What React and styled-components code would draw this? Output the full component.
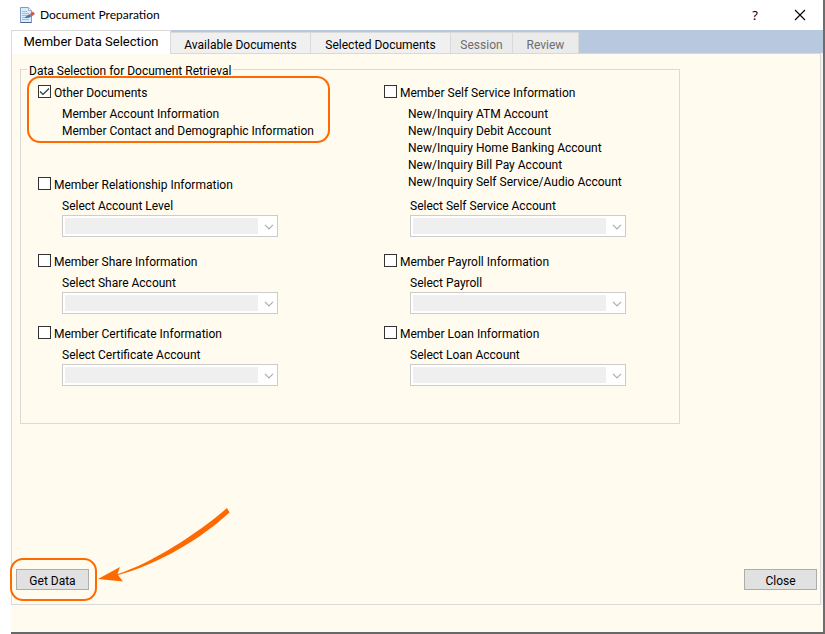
import React, { useId, useState } from "react";
import styled, { createGlobalStyle, css } from "styled-components";

const GlobalStyle = createGlobalStyle`
  * {
    box-sizing: border-box;
  }

  body {
    margin: 0;
    background: #fff;
    color: #000;
    font-family: Roboto, Arial, sans-serif;
    font-size: 12px;
    line-height: 17px;
  }
`;

const Window = styled.main`
  display: flex;
  flex-direction: column;
  min-height: 100vh;
  margin-left: 11px;
  padding-bottom: 27px;
  background: #fffbef;
  border-right: 2px solid #6d6d6d;
  border-bottom: 2px solid #66686a;
`;

const TitleBar = styled.header`
  display: flex;
  align-items: center;
  height: 30px;
  padding: 0 8px;
  background: #fff;
`;

const Title = styled.h1`
  flex-grow: 1;
  margin: 0 0 0 5px;
  font-family: Lato, sans-serif;
  font-size: 12px;
  line-height: 16px;
  font-weight: normal;
`;

const TitleButton = styled.button`
  display: flex;
  align-items: center;
  justify-content: center;
  width: 60px;
  height: 28px;
  padding: 0;
  border: none;
  background: transparent;
  font-family: "Noto Sans", sans-serif;
  font-size: 13px;
  color: #000;

  &:last-child {
    width: 30px;
  }
`;

const TabStrip = styled.div`
  display: flex;
  align-items: flex-end;
  height: 23px;
  background: #b8c8df;
`;

const Tab = styled.button`
  min-width: ${(props) => props.$width};
  height: 21px;
  padding: 4px 8px 0;
  border: 1px solid #dadada;
  border-width: 1px 1px 0 0;
  background: #f0f0f0;
  font: inherit;
  line-height: 16px;
  white-space: nowrap;
  color: #000;

  &:disabled {
    background: #ebebeb;
    color: #6d6d6d;
  }

  ${(props) =>
    props.$active &&
    css`
      height: 24px;
      margin-bottom: -1px;
      padding: 0 8px 1px;
      border-left-width: 1px;
      background: #fff;
      font-size: 13px;
      z-index: 1;
    `}
`;

const Panel = styled.section`
  display: flex;
  flex-direction: column;
  flex-grow: 1;
  margin-right: 2px;
  padding: 6px 3px 14px 4px;
  border: 1px solid #d9d9d9;
  box-shadow: 2px 0 0 #f3f3f1;
`;

const Group = styled.fieldset`
  width: 100%;
  max-width: 660px;
  margin: 0 0 0 4px;
  padding: 6px 6px 37px;
  border: 1px solid #dadada;
`;

const Legend = styled.legend`
  padding: 3px 2px 0;
  line-height: 16px;
`;

const Columns = styled.div`
  display: grid;
  grid-template-columns: minmax(0, 346px) 1fr;
  row-gap: 12px;
  padding-left: 11px;
`;

const Cell = styled.div`
  display: flex;
  flex-direction: column;
  justify-content: space-between;
  min-height: ${(props) => (props.$tall ? "152px" : "60px")};
  margin-bottom: ${(props) => (props.$tall ? "5px" : "0")};
`;

const highlight = css`
  position: relative;

  &::after {
    content: "";
    position: absolute;
    inset: ${(props) => props.$inset};
    border: 2px solid #ff6a00;
    border-radius: 13px;
    pointer-events: none;
  }
`;

const Option = styled.div`
  width: fit-content;
  ${(props) => props.$inset && highlight}
`;

const CheckLabel = styled.label`
  display: flex;
  align-items: flex-start;
  gap: 3px;
  padding-bottom: 1px;
  line-height: 16px;
`;

const Checkbox = styled.input`
  appearance: none;
  flex-shrink: 0;
  width: 13px;
  height: 13px;
  margin: 0;
  border: 1px solid #333;
  background: #fff;

  &:checked {
    background: #fff
      url("data:image/svg+xml,%3Csvg xmlns='http://www.w3.org/2000/svg' viewBox='0 0 11 11'%3E%3Cpath d='M1 5.5 4 8.5 10 2.5' fill='none' stroke='%23333' stroke-width='1.2'/%3E%3C/svg%3E");
  }
`;

const Lines = styled.ul`
  margin: 4px 0 0;
  padding: 0 0 0 24px;
  list-style: none;
`;

const Field = styled.div`
  display: flex;
  flex-direction: column;
  margin-top: 4px;
  padding-left: ${(props) => (props.$right ? "26px" : "24px")};
`;

const SelectBox = styled.div`
  position: relative;
  width: 216px;
  height: 22px;

  svg {
    position: absolute;
    right: 4px;
    top: 9px;
    pointer-events: none;
  }
`;

const Select = styled.select`
  appearance: none;
  display: block;
  width: 100%;
  height: 100%;
  border: 1px solid #ccc;
  border-radius: 0;
  background: linear-gradient(#efefef, #efefef) 2px 2px /
    calc(100% - 21px) calc(100% - 4px) no-repeat #fff;
  opacity: 1;
`;

const Footer = styled.footer`
  display: flex;
  align-items: flex-end;
  justify-content: space-between;
  flex-grow: 1;
`;

const Action = styled.div`
  ${(props) => props.$inset && highlight}
`;

const Button = styled.button`
  display: block;
  width: 73px;
  height: 21px;
  padding: 3px 0 0;
  border: 1px solid #adadad;
  background: #e1e1e1;
  font: inherit;
  line-height: 16px;
  color: #000;
`;

const Arrow = styled.svg`
  position: absolute;
  left: 82px;
  bottom: 7px;
  pointer-events: none;
`;

const DocumentIcon = () => (
  <svg width="16" height="16" viewBox="0 0 16 16" aria-hidden="true">
    <path d="M1.5.5h8l3 3v12h-11z" fill="#dcebfa" stroke="#7a9cc9" />
    <path d="M9.5.5v3h3" fill="#fff" stroke="#9ab4d8" />
    <path d="M3 4.5h5M3 6.5h7M3 8.5h5M3 10.5h4M3 12.5h7" stroke="#9dbde4" />
    <path d="M5.5 11 8 8.5l3-1.5 1.5 2.5-3 1.5z" fill="#4f7ba3" />
    <path d="m11 7 3-2.5 2 2.5-3.5 2.5z" fill="#c9614a" />
    <path d="m1.5 15.5h11" stroke="#4a6890" />
  </svg>
);

const SelectField = ({ label, right }) => {
  const id = useId();
  return (
    <Field $right={right}>
      <label htmlFor={id}>{label}</label>
      <SelectBox>
        <Select id={id} disabled />
        <svg width="10" height="6" viewBox="0 0 10 6">
          <path d="m1 .8 4 4 4-4" fill="none" stroke="#adadad" strokeWidth="1.2" />
        </svg>
      </SelectBox>
    </Field>
  );
};

const DocumentOption = ({ label, lines, inset, defaultChecked }) => (
  <Option $inset={inset}>
    <CheckLabel>
      <Checkbox type="checkbox" defaultChecked={defaultChecked} />
      {label}
    </CheckLabel>
    {lines && (
      <Lines>
        {lines.map((line) => (
          <li key={line}>{line}</li>
        ))}
      </Lines>
    )}
  </Option>
);

const tabs = [
  { name: "Member Data Selection", width: "160px" },
  { name: "Available Documents", width: "140px" },
  { name: "Selected Documents", width: "140px" },
  { name: "Session", width: "62px", disabled: true },
  { name: "Review", width: "66px", disabled: true },
];

const rows = [
  ["Member Share Information", "Select Share Account"],
  ["Member Payroll Information", "Select Payroll"],
  ["Member Certificate Information", "Select Certificate Account"],
  ["Member Loan Information", "Select Loan Account"],
];

const App = () => {
  const [active, setActive] = useState(tabs[0].name);

  return (
    <>
      <GlobalStyle />
      <Window>
        <TitleBar>
          <DocumentIcon />
          <Title>Document Preparation</Title>
          <TitleButton aria-label="Help">?</TitleButton>
          <TitleButton aria-label="Close window">
            <svg width="12" height="12" viewBox="0 0 12 12">
              <path d="m1 1 10 10M11 1 1 11" stroke="#000" strokeWidth="1.1" />
            </svg>
          </TitleButton>
        </TitleBar>
        <TabStrip role="tablist">
          {tabs.map((tab) => (
            <Tab
              key={tab.name}
              role="tab"
              aria-selected={tab.name === active}
              $active={tab.name === active}
              $width={tab.width}
              disabled={tab.disabled}
              onClick={() => setActive(tab.name)}
            >
              {tab.name}
            </Tab>
          ))}
        </TabStrip>
        <Panel>
          <Group>
            <Legend>Data Selection for Document Retrieval</Legend>
            <Columns>
              <Cell $tall>
                <DocumentOption
                  label="Other Documents"
                  defaultChecked
                  inset="-9px -16px -3px -11px"
                  lines={[
                    "Member Account Information",
                    "Member Contact and Demographic Information",
                  ]}
                />
                <div>
                  <DocumentOption label="Member Relationship Information" />
                  <SelectField label="Select Account Level" />
                </div>
              </Cell>
              <Cell $tall>
                <DocumentOption
                  label="Member Self Service Information"
                  lines={[
                    "New/Inquiry ATM Account",
                    "New/Inquiry Debit Account",
                    "New/Inquiry Home Banking Account",
                    "New/Inquiry Bill Pay Account",
                    "New/Inquiry Self Service/Audio Account",
                  ]}
                />
                <SelectField label="Select Self Service Account" right />
              </Cell>
              {rows.map(([label, field], i) => (
                <Cell key={label}>
                  <DocumentOption label={label} />
                  <SelectField label={field} right={i % 2 === 1} />
                </Cell>
              ))}
            </Columns>
          </Group>
          <Footer>
            <Action $inset="-11px -8px -11px -6px">
              <Button>Get Data</Button>
              <Arrow width="132" height="75" viewBox="98 508 132 75">
                <path
                  d="M227 508 229.5 512.5C203 537 160 564 118 575L123 581.5 98 579 120 567 117.5 574C150 564 197 534 227 508Z"
                  fill="#ff6a00"
                />
              </Arrow>
            </Action>
            <Action>
              <Button>Close</Button>
            </Action>
          </Footer>
        </Panel>
      </Window>
    </>
  );
};

export default App;
